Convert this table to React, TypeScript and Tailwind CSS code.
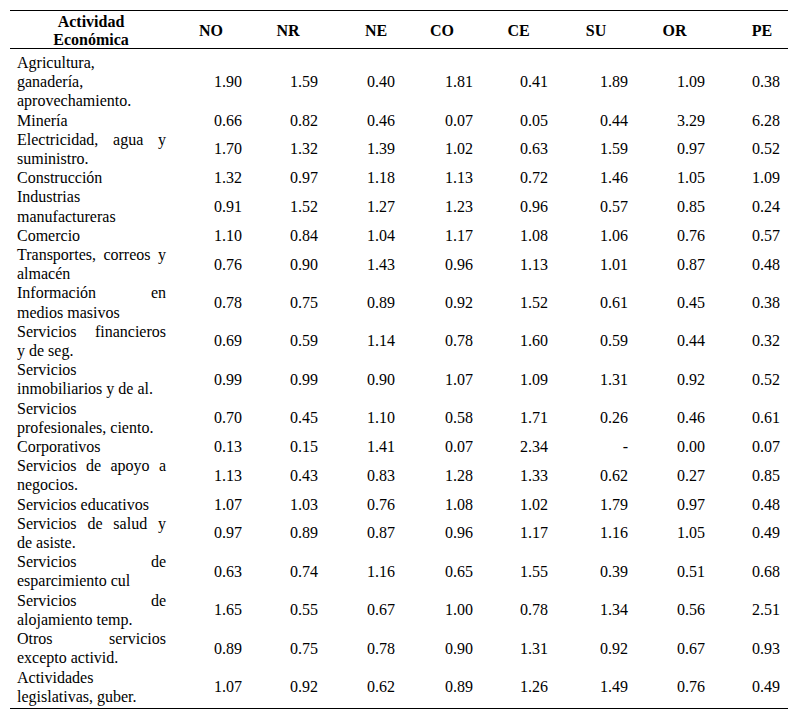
const cols = 'grid grid-cols-[162px_78px_76px_77px_78px_75px_80px_77px_75px]'

const heads: { label: string; cls: string }[] = [
  { label: 'NO', cls: '' },
  { label: 'NR', cls: '' },
  { label: 'NE', cls: 'pl-[23px]' },
  { label: 'CO', cls: '' },
  { label: 'CE', cls: '' },
  { label: 'SU', cls: '' },
  { label: 'OR', cls: '' },
  { label: 'PE', cls: 'pl-[23px]' },
]

const rows: [string[], string[]][] = [
  [['Agricultura,', 'ganadería,', 'aprovechamiento.'], ['1.90', '1.59', '0.40', '1.81', '0.41', '1.89', '1.09', '0.38']],
  [['Minería'], ['0.66', '0.82', '0.46', '0.07', '0.05', '0.44', '3.29', '6.28']],
  [['Electricidad, agua y', 'suministro.'], ['1.70', '1.32', '1.39', '1.02', '0.63', '1.59', '0.97', '0.52']],
  [['Construcción'], ['1.32', '0.97', '1.18', '1.13', '0.72', '1.46', '1.05', '1.09']],
  [['Industrias', 'manufactureras'], ['0.91', '1.52', '1.27', '1.23', '0.96', '0.57', '0.85', '0.24']],
  [['Comercio'], ['1.10', '0.84', '1.04', '1.17', '1.08', '1.06', '0.76', '0.57']],
  [['Transportes, correos y', 'almacén'], ['0.76', '0.90', '1.43', '0.96', '1.13', '1.01', '0.87', '0.48']],
  [['Información en', 'medios masivos'], ['0.78', '0.75', '0.89', '0.92', '1.52', '0.61', '0.45', '0.38']],
  [['Servicios financieros', 'y de seg.'], ['0.69', '0.59', '1.14', '0.78', '1.60', '0.59', '0.44', '0.32']],
  [['Servicios', 'inmobiliarios y de al.'], ['0.99', '0.99', '0.90', '1.07', '1.09', '1.31', '0.92', '0.52']],
  [['Servicios', 'profesionales, ciento.'], ['0.70', '0.45', '1.10', '0.58', '1.71', '0.26', '0.46', '0.61']],
  [['Corporativos'], ['0.13', '0.15', '1.41', '0.07', '2.34', '-', '0.00', '0.07']],
  [['Servicios de apoyo a', 'negocios.'], ['1.13', '0.43', '0.83', '1.28', '1.33', '0.62', '0.27', '0.85']],
  [['Servicios educativos'], ['1.07', '1.03', '0.76', '1.08', '1.02', '1.79', '0.97', '0.48']],
  [['Servicios de salud y', 'de asiste.'], ['0.97', '0.89', '0.87', '0.96', '1.17', '1.16', '1.05', '0.49']],
  [['Servicios de', 'esparcimiento cul'], ['0.63', '0.74', '1.16', '0.65', '1.55', '0.39', '0.51', '0.68']],
  [['Servicios de', 'alojamiento temp.'], ['1.65', '0.55', '0.67', '1.00', '0.78', '1.34', '0.56', '2.51']],
  [['Otros servicios', 'excepto activid.'], ['0.89', '0.75', '0.78', '0.90', '1.31', '0.92', '0.67', '0.93']],
  [['Actividades', 'legislativas, guber.'], ['1.07', '0.92', '0.62', '0.89', '1.26', '1.49', '0.76', '0.49']],
]

export default function App() {
  return (
    <div className="min-h-[720px] w-[800px] bg-white pl-[10px] pt-[10px] [font-family:'Liberation_Serif','Times_New_Roman',serif] text-[16px] leading-[19.2px] text-black">
      <div className="w-[778px]">
        {/* Header */}
        <div className={`${cols} border-y border-black`}>
          <div className="pt-[2px] text-center font-bold leading-[17.5px]">
            Actividad
            <br />
            Económica
          </div>
          {heads.map((h) => (
            <div key={h.label} className={`flex items-center justify-center pt-[3px] font-bold ${h.cls}`}>
              {h.label}
            </div>
          ))}
        </div>

        {/* Body */}
        <div className="border-b border-black pb-[2px] pt-[4px]">
          {rows.map(([lines, vals]) => (
            <div key={lines.join(' ')} className={cols}>
              <div className="pl-[7px] pr-[6px]">
                {lines.map((l, i) => (
                  <div key={i} className={i < lines.length - 1 ? 'text-justify [text-align-last:justify]' : ''}>
                    {l}
                  </div>
                ))}
              </div>
              {vals.map((v, i) => (
                <div key={i} className="flex items-center justify-end pr-2">
                  {v}
                </div>
              ))}
            </div>
          ))}
        </div>
      </div>
    </div>
  )
}
